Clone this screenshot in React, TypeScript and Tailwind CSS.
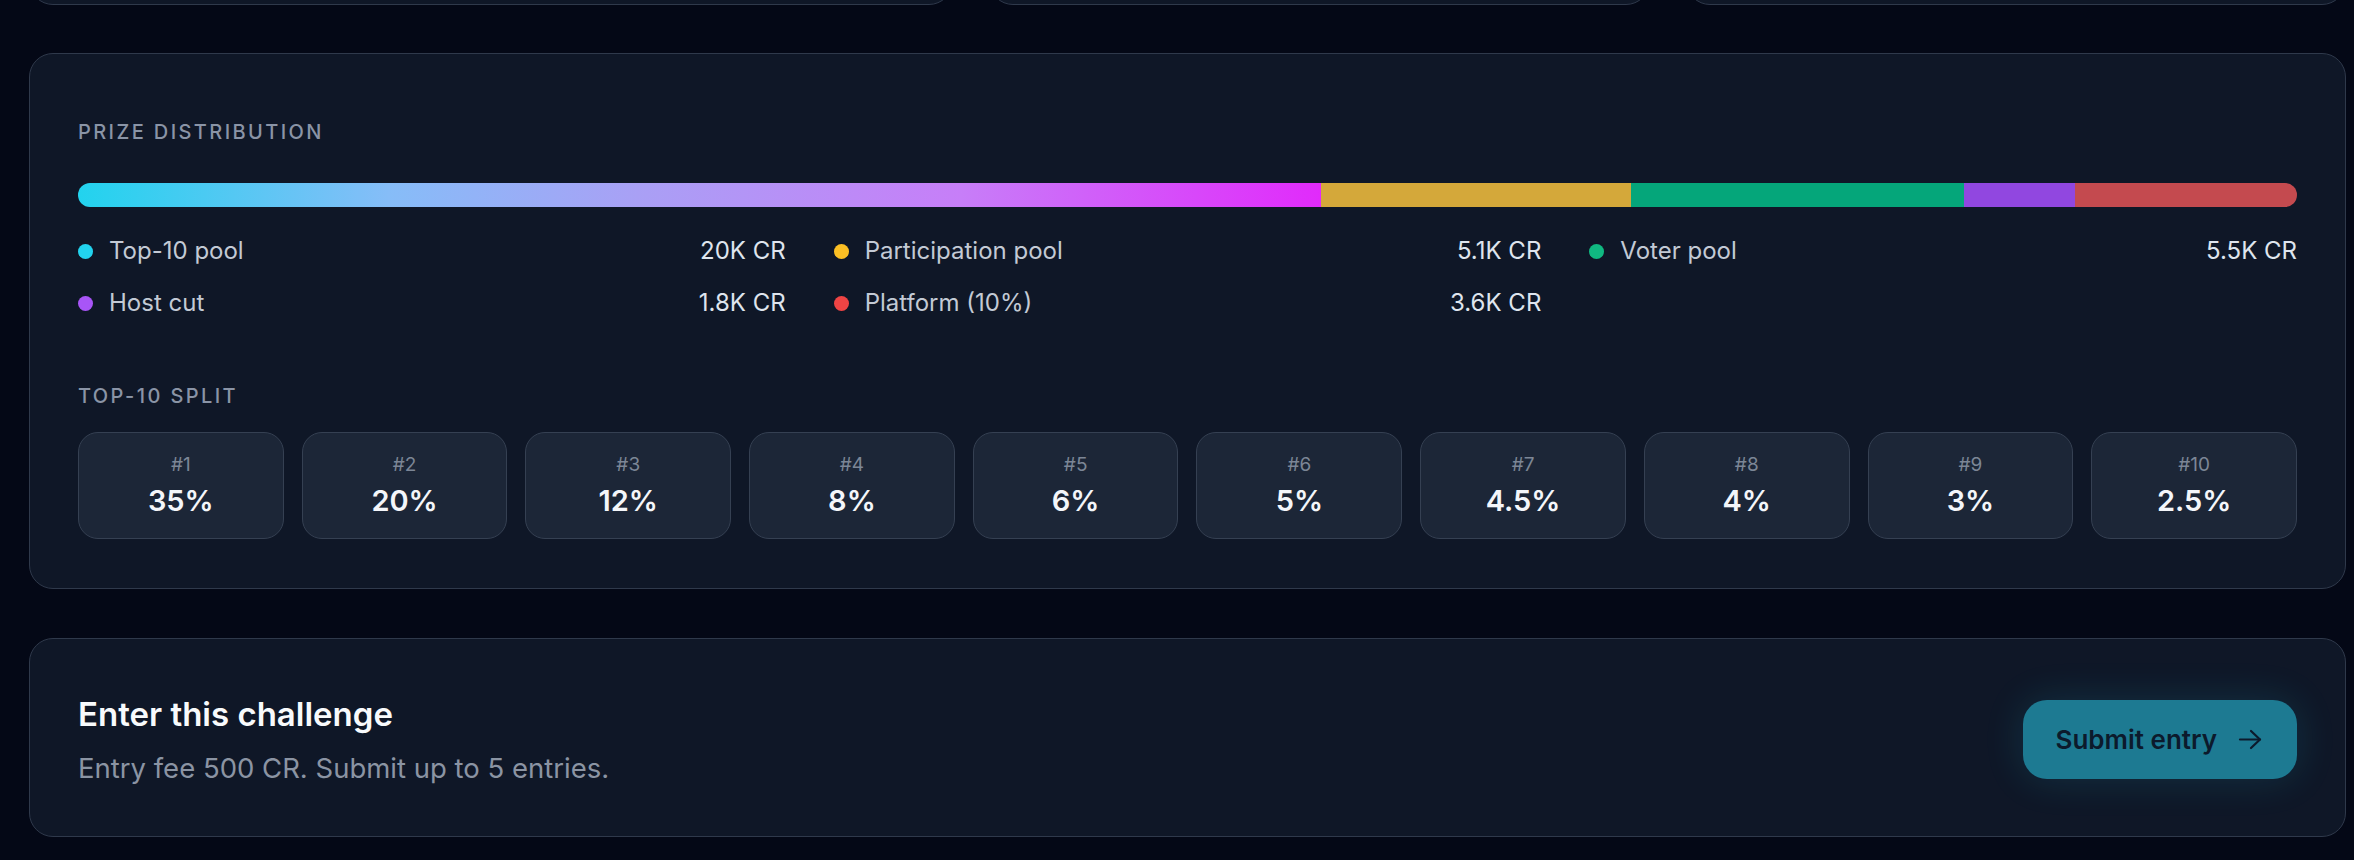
import React from "react";

interface PoolShare {
  label: string;
  value: string;
  pct: number;
  dot: string;
  bar: string;
}

const pools: PoolShare[] = [
  { label: "Top-10 pool", value: "20K CR", pct: 56, dot: "bg-[#22d3ee]", bar: "bg-[linear-gradient(90deg,#22d3ee_0%,#86bdf8_25%,#a9a0f5_45%,#c77ef8_71%,#e12afb_100%)]" },
  { label: "Participation pool", value: "5.1K CR", pct: 14, dot: "bg-[#fbbf24]", bar: "bg-[#d4a83a]" },
  { label: "Voter pool", value: "5.5K CR", pct: 15, dot: "bg-[#10b981]", bar: "bg-[#05a67a]" },
  { label: "Host cut", value: "1.8K CR", pct: 5, dot: "bg-[#a855f7]", bar: "bg-[#9147e0]" },
  { label: "Platform (10%)", value: "3.6K CR", pct: 10, dot: "bg-[#ef4444]", bar: "bg-[#c44a4f]" },
];

const split = ["35%", "20%", "12%", "8%", "6%", "5%", "4.5%", "4%", "3%", "2.5%"];

function SectionLabel({ children }: { children: React.ReactNode }) {
  return (
    <div className="text-[20px] leading-[27px] font-medium uppercase tracking-[0.12em] text-[#8a94a6]">
      {children}
    </div>
  );
}

function PrizeDistribution() {
  return (
    <section className="rounded-[24px] border border-[#2f394b] bg-[#0f1727] px-[48px] pt-[65px] pb-[49px]">
      <SectionLabel>Prize distribution</SectionLabel>

      <div className="mt-[37px] flex h-[24px] w-full overflow-hidden rounded-full">
        {pools.map((p) => (
          <div key={p.label} className={`h-full ${p.bar}`} style={{ width: `${p.pct}%` }} />
        ))}
      </div>

      <div className="mt-[28px] grid grid-cols-3 gap-x-[48px] gap-y-[20px]">
        {pools.map((p) => (
          <div key={p.label} className="flex items-center justify-between text-[24px] leading-[32px]">
            <div className="flex items-center gap-[16px]">
              <span className={`h-[15px] w-[15px] rounded-full ${p.dot}`} />
              <span className="text-[#c3cad5]">{p.label}</span>
            </div>
            <span className="text-[#dfe5ee]">{p.value}</span>
          </div>
        ))}
      </div>

      <div className="mt-[64px]">
        <SectionLabel>Top-10 split</SectionLabel>
      </div>

      <div className="mt-[22px] grid grid-cols-10 gap-[18px]">
        {split.map((s, i) => (
          <div
            key={i}
            className="flex flex-col items-center rounded-[20px] border border-[#354052] bg-[#1c2637] pt-[18px] pb-[19px]"
          >
            <div className="text-[19px] leading-[27px] text-[#7c8696]">#{i + 1}</div>
            <div className="mt-[5px] text-[29px] leading-[36px] font-semibold text-[#f4f6fa]">{s}</div>
          </div>
        ))}
      </div>
    </section>
  );
}

function EnterChallenge() {
  return (
    <section className="flex items-center justify-between rounded-[24px] border border-[#2f394b] bg-[#0f1727] px-[48px] pt-[54px] pb-[50px]">
      <div>
        <h2 className="text-[33px] leading-[42px] font-semibold text-[#f8fafc]">Enter this challenge</h2>
        <p className="mt-[15px] text-[27.5px] leading-[36px] text-[#8b94a3]">Entry fee 500 CR. Submit up to 5 entries.</p>
      </div>
      <button className="flex h-[79px] items-center gap-[21px] rounded-[24px] bg-[#1d7a92] pl-[33px] pr-[35px] text-[26px] font-semibold text-[#0c1a2c] shadow-[0_0_40px_rgba(34,211,238,0.14)]">
        Submit entry
        <svg width="24" height="21" viewBox="0 0 24 21" fill="none" stroke="currentColor" strokeWidth={2.2} strokeLinecap="round" strokeLinejoin="round">
          <path d="M2 10.5h20" />
          <path d="M13 2l9 8.5-9 8.5" />
        </svg>
      </button>
    </section>
  );
}

export default function App() {
  return (
    <div className="h-[860px] w-full overflow-hidden bg-[#040816] pl-[29px] pr-[8px] font-[Inter,sans-serif]">
      {/* bottom edge of the stat cards above */}
      <div className="flex h-[5px] items-end overflow-hidden">
        <div className="grid w-full shrink-0 grid-cols-[1.4fr_1fr_1fr] gap-[36px]">
          <div className="h-[60px] rounded-[24px] border border-[#2f394b] bg-[#0f1727]" />
          <div className="h-[60px] rounded-[24px] border border-[#2f394b] bg-[#0f1727]" />
          <div className="h-[60px] rounded-[24px] border border-[#2f394b] bg-[#0f1727]" />
        </div>
      </div>

      <div className="mt-[48px]">
        <PrizeDistribution />
      </div>
      <div className="mt-[49px]">
        <EnterChallenge />
      </div>
    </div>
  );
}
